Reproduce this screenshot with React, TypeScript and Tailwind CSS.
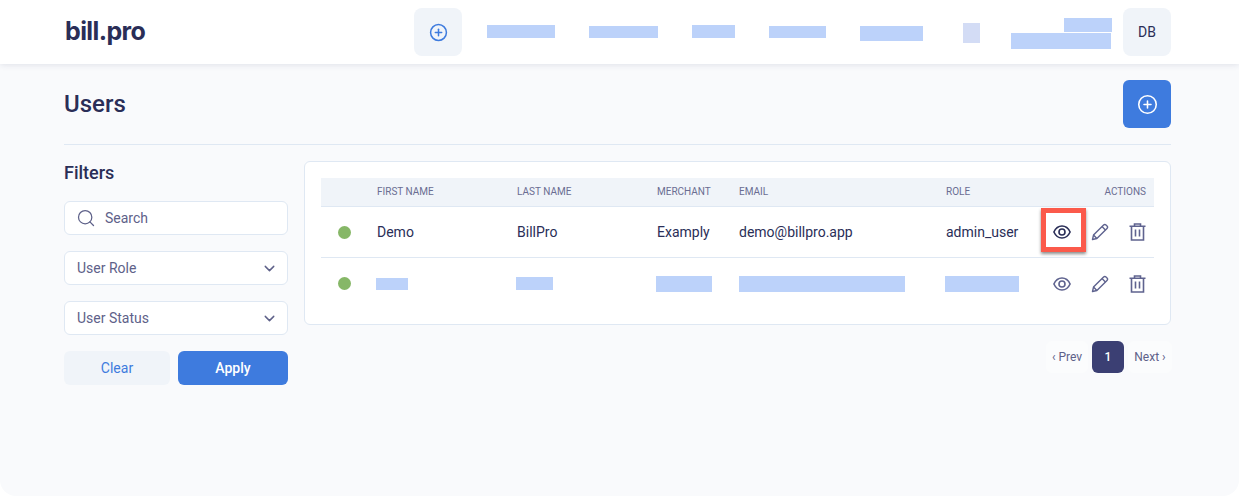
import { ChevronDown, CirclePlus, Search } from 'lucide-react';

const navBlocks = [
  'ml-[25px] mt-[25px] h-[13px] w-[68px]',
  'ml-[34px] mt-[26px] h-[12px] w-[69px]',
  'ml-[34px] mt-[25px] h-[13px] w-[43px]',
  'ml-[34px] mt-[26px] h-[12px] w-[57px]',
  'ml-[34px] mt-[26px] h-[15px] w-[63px]',
];

function EyeIcon({ className }: { className: string }) {
  return (
    <svg viewBox="0 0 18 14" fill="none" stroke="currentColor" strokeWidth="1.6" className={className}>
      <path d="M0.9 7C2.6 3.3 5.5 1 9 1s6.4 2.3 8.1 6c-1.7 3.7-4.6 6-8.1 6S2.6 10.7 0.9 7Z" />
      <circle cx="9" cy="7" r="3" />
    </svg>
  );
}

function PencilIcon() {
  return (
    <svg viewBox="0 0 18 18" fill="none" stroke="currentColor" strokeWidth="1.4" className="h-[18px] w-[18px] text-[#5f638f]">
      <path d="M1.5 16.5l1-4.4L12.6 2a1.7 1.7 0 0 1 2.4 0l1 1a1.7 1.7 0 0 1 0 2.4L5.9 15.5l-4.4 1Z" strokeLinejoin="round" />
      <path d="M11 3.6l3.4 3.4M2.5 12.1l3.4 3.4" />
    </svg>
  );
}

function TrashIcon() {
  return (
    <svg viewBox="0 0 17 18" fill="none" stroke="currentColor" strokeWidth="1.6" className="h-[18px] w-[17px] text-[#5f638f]">
      <path d="M0.5 3.2h16M5.5 3V1h6v2M2.5 3.2V17h12V3.2M6.5 6.5v7M10.5 6.5v7" />
    </svg>
  );
}

function RowActions({ eyeClass, highlighted }: { eyeClass: string; highlighted?: boolean }) {
  return (
    <div className="relative flex items-center justify-end pr-2">
      <EyeIcon className={`h-[14px] w-[18px] ${eyeClass}`} />
      <span className="ml-[20px]">
        <PencilIcon />
      </span>
      <span className="ml-[20px]">
        <TrashIcon />
      </span>
      {highlighted && (
        <div className="absolute right-[68px] top-[-15px] h-[44px] w-[45px] border-[5px] border-[#fb5a4b] shadow-[0_2px_3px_rgba(0,0,0,0.45)]" />
      )}
    </div>
  );
}

function FilterSelect({ label }: { label: string }) {
  return (
    <div className="flex h-[34px] items-center justify-between rounded-md border border-[#dfe8f3] bg-white pl-3 pr-[9px] text-sm text-[#5e6189]">
      {label}
      <ChevronDown size={17} strokeWidth={2} />
    </div>
  );
}

export default function App() {
  return (
    <div className="h-[496px] w-[1239px] overflow-hidden bg-white font-['Roboto',sans-serif]">
      <div className="h-full rounded-b-2xl bg-[#f9fafc]">
        <header className="flex h-16 items-start bg-white pl-[65px] shadow-[0_1px_6px_rgba(40,50,90,0.12)]">
          <span className="mt-[12px] w-[349px] font-['Inter',sans-serif] text-[25px] font-bold leading-[38px] tracking-[-0.6px] text-[#2a2e57]">
            bill.pro
          </span>
          <button className="mt-2 flex h-12 w-12 items-center justify-center rounded-lg bg-[#f0f4f9] text-[#3e7bde]">
            <CirclePlus size={19} strokeWidth={1.9} />
          </button>
          {navBlocks.map((cls) => (
            <div key={cls} className={`bg-[#bcd2fa] ${cls}`} />
          ))}
          <div className="ml-[40px] mt-[23px] h-[20px] w-[17px] bg-[#d3dcf5]" />
          <div className="ml-[31px] mt-[18px] flex w-[101px] flex-col items-end gap-px">
            <div className="h-[14px] w-[48px] bg-[#bcd2fa]" />
            <div className="h-[16px] w-[100px] self-start bg-[#bcd2fa]" />
          </div>
          <div className="ml-[11px] mt-2 flex h-12 w-12 items-center justify-center rounded-lg bg-[#f0f4f9] text-sm text-[#2a2e57]">
            DB
          </div>
        </header>

        <main className="pl-[64px] pr-[68px]">
          <div className="flex h-[81px] items-start justify-between border-b border-[#dfe8f3] pt-4">
            <h1 className="mt-[8px] text-2xl font-medium leading-8 text-[#2a2e57]">Users</h1>
            <button className="flex h-12 w-12 items-center justify-center rounded-md bg-[#3e7bde] text-white">
              <CirclePlus size={21} strokeWidth={1.8} />
            </button>
          </div>

          <div className="mt-4 flex gap-4">
            <aside className="w-[224px] shrink-0">
              <h2 className="text-lg font-medium leading-[24px] text-[#2a2e57]">Filters</h2>
              <div className="mt-4 flex flex-col gap-4">
                <div className="flex h-[34px] items-center rounded-md border border-[#dfe8f3] bg-white pl-[11px] text-sm text-[#5e6189]">
                  <Search size={20} strokeWidth={1.5} />
                  <span className="ml-[9px]">Search</span>
                </div>
                <FilterSelect label="User Role" />
                <FilterSelect label="User Status" />
                <div className="flex gap-2 text-sm">
                  <button className="h-[34px] w-[106px] rounded-md bg-[#f0f4f9] text-[#3e7bde]">Clear</button>
                  <button className="h-[34px] flex-1 rounded-md bg-[#3e7bde] font-medium text-white">Apply</button>
                </div>
              </div>
            </aside>

            <section className="flex-1">
              <div className="h-[164px] rounded-md border border-[#dfe8f3] bg-white px-4 pt-4 text-sm text-[#2a2e57]">
                <div className="grid h-[29px] grid-cols-[56px_140px_140px_82px_207px_1fr] items-center border-b border-[#dfe8f3] bg-[#f0f4f9] pt-px text-[10px] text-[#6a6d92]">
                  <span />
                  <span>FIRST NAME</span>
                  <span>LAST NAME</span>
                  <span>MERCHANT</span>
                  <span>EMAIL</span>
                  <span className="flex justify-between pr-2">
                    ROLE
                    <span>ACTIONS</span>
                  </span>
                </div>
                <div className="grid h-[51px] grid-cols-[56px_140px_140px_82px_207px_1fr] items-center border-b border-[#dfe8f3]">
                  <span className="ml-[17px] h-[13px] w-[13px] rounded-full bg-[#86b767]" />
                  <span>Demo</span>
                  <span>BillPro</span>
                  <span>Examply</span>
                  <span>demo@billpro.app</span>
                  <div className="flex items-center justify-between">
                    <span>admin_user</span>
                    <RowActions eyeClass="text-[#2a2e57]" highlighted />
                  </div>
                </div>
                <div className="grid h-[51px] grid-cols-[56px_140px_140px_82px_207px_1fr] items-center">
                  <span className="ml-[17px] h-[13px] w-[13px] rounded-full bg-[#86b767]" />
                  <div className="-ml-px h-[12px] w-[32px] bg-[#bcd2fa]" />
                  <div className="-ml-px h-[13px] w-[37px] bg-[#bcd2fa]" />
                  <div className="-ml-px h-[16px] w-[56px] bg-[#bcd2fa]" />
                  <div className="h-[16px] w-[166px] bg-[#bcd2fa]" />
                  <div className="flex items-center justify-between">
                    <div className="-ml-px h-[16px] w-[74px] bg-[#bcd2fa]" />
                    <RowActions eyeClass="text-[#5f638f]" />
                  </div>
                </div>
              </div>

              <nav className="-mr-px mt-4 flex justify-end gap-1 text-xs text-[#5e6189]">
                <span className="flex h-8 w-[42px] items-center justify-center rounded-md bg-[#fbfcfd]">‹ Prev</span>
                <span className="flex h-8 w-8 items-center justify-center rounded-md bg-[#3b3f73] font-medium text-white">1</span>
                <span className="flex h-8 w-[44px] items-center justify-center rounded-md bg-[#fbfcfd]">Next ›</span>
              </nav>
            </section>
          </div>
        </main>
      </div>
    </div>
  );
}
